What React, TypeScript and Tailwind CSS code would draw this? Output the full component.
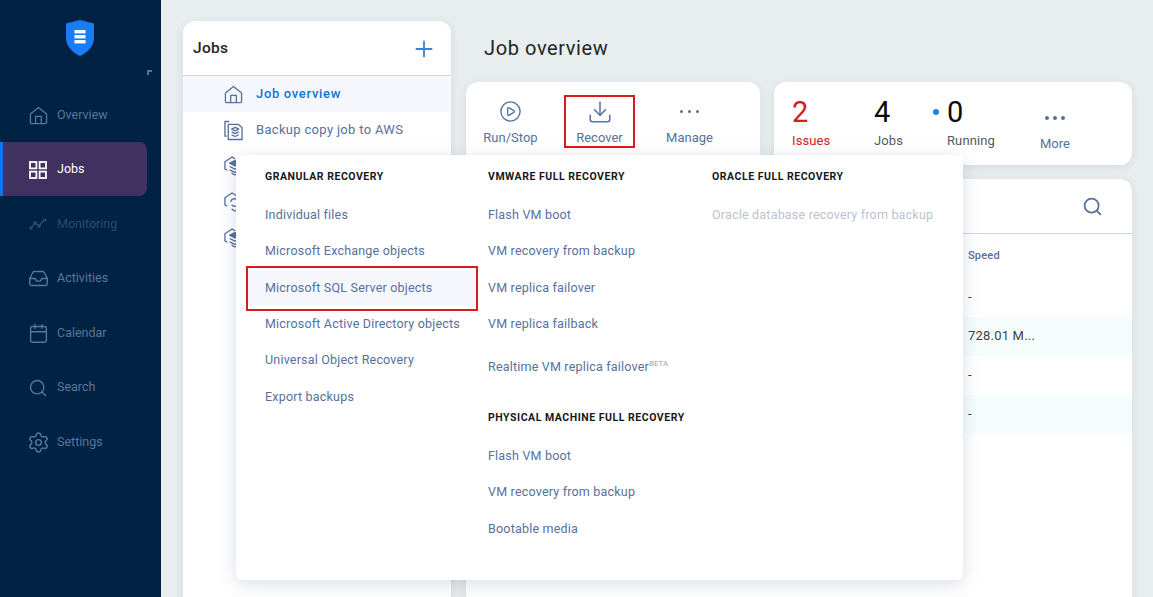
import { Calendar, CirclePlay, Download, Inbox, Plus, Search, Settings } from "lucide-react";

const font = { fontFamily: "Roboto, sans-serif" };

function HouseIcon({ className }: { className?: string }) {
    return (
        <svg viewBox="0 0 20 20" fill="none" stroke="currentColor" strokeWidth="1.4" strokeLinejoin="round" className={className}>
            <path d="M1.5 8.5 10 1.5l8.500 7v8.500a1.500 1.500 0 0 1-1.500 1.500H3a1.500 1.500 0 0 1-1.500-1.500z" />
            <path d="M7 18.500V11h6v7.500" />
        </svg>
    );
}

function GridIcon({ className }: { className?: string }) {
    return (
        <svg viewBox="0 0 18 18" fill="none" stroke="currentColor" strokeWidth="1.8" className={className}>
            <rect x="1" y="1" width="6.400" height="6.400" />
            <rect x="10.600" y="1" width="6.400" height="6.400" />
            <rect x="1" y="10.600" width="6.400" height="6.400" />
            <rect x="10.600" y="10.600" width="6.400" height="6.400" />
        </svg>
    );
}

function TrendIcon({ className }: { className?: string }) {
    return (
        <svg viewBox="0 0 18 12" fill="none" stroke="currentColor" strokeWidth="1.300" className={className}>
            <path d="M2 10 6 5l4 3 5-6" />
            <circle cx="2" cy="10" r="1.200" />
            <circle cx="6" cy="5" r="1.200" />
            <circle cx="10" cy="8" r="1.200" />
            <circle cx="15.500" cy="2" r="1.200" />
        </svg>
    );
}

function DocStackIcon({ className }: { className?: string }) {
    return (
        <svg viewBox="0 0 20 21" fill="none" stroke="currentColor" strokeWidth="1.400" strokeLinejoin="round" className={className}>
            <path d="M5.500 1H1v15.500h2" />
            <path d="M4.500 4H15l4 3.500V20H4.500z" />
            <path d="m8 9 3.800-1.800L15.500 9l-3.700 1.800zM8 12l3.800 1.800 3.700-1.800M8 15l3.800 1.800 3.700-1.800" />
        </svg>
    );
}

function CubeStackIcon({ className }: { className?: string }) {
    return (
        <svg viewBox="0 0 20 22" fill="none" stroke="currentColor" strokeWidth="1.400" strokeLinejoin="round" className={className}>
            <path d="M3.500 15.500 1 14V6.500L8.500 1.500l3 2" />
            <path d="m6 8 5.500-2.800L17 8l-5.500 2.800z" fill="currentColor" />
            <path d="m6 11.500 5.500 2.800 5.500-2.800M6 15l5.500 2.800L17 15M8 18.500l3.500 2 3.500-2" />
        </svg>
    );
}

function CubeSyncIcon({ className }: { className?: string }) {
    return (
        <svg viewBox="0 0 20 22" fill="none" stroke="currentColor" strokeWidth="1.400" strokeLinejoin="round" className={className}>
            <path d="M3.500 15.500 1 14V6.500L8.500 1.500 14 5" />
            <path d="M7 11a4 4 0 0 1 7-2M15 12a4 4 0 0 1-7 2" />
            <path d="m8 18.500 3.500 2 3.500-2" />
        </svg>
    );
}

function Dots({ className }: { className?: string }) {
    return (
        <div className={`flex gap-[4.500px] ${className ?? ""}`}>
            <span className="size-[3.500px] rounded-full bg-[#56719b]" />
            <span className="size-[3.500px] rounded-full bg-[#56719b]" />
            <span className="size-[3.500px] rounded-full bg-[#56719b]" />
        </div>
    );
}

const navItems = [
    { name: "Overview", icon: <HouseIcon className="size-[19px]" /> },
    { name: "Jobs", icon: <GridIcon className="size-[18px]" />, active: true },
    { name: "Monitoring", icon: <TrendIcon className="h-[12px] w-[18px]" />, disabled: true },
    { name: "Activities", icon: <Inbox className="size-[21px]" strokeWidth={1.600} /> },
    { name: "Calendar", icon: <Calendar className="size-[21px]" strokeWidth={1.600} /> },
    { name: "Search", icon: <Search className="size-[20px]" strokeWidth={1.700} /> },
    { name: "Settings", icon: <Settings className="size-[23px]" strokeWidth={1.500} /> },
];

function Sidebar() {
    return (
        <aside className="flex h-full w-[161px] shrink-0 flex-col bg-[#012242]">
            <div className="relative h-[87px] shrink-0">
                <svg viewBox="0 0 30 36" className="absolute left-[65px] top-[20px] h-[36px] w-[30px]">
                    <path d="M15 0 29 3.500V18c0 8-6 14-14 18C7 32 1 26 1 18V3.500z" fill="#1a7cf8" />
                    <rect x="9.500" y="10" width="11" height="3.400" fill="#fff" />
                    <rect x="9.500" y="15" width="11" height="3.400" fill="#fff" />
                    <rect x="9.500" y="20" width="11" height="3.400" fill="#fff" />
                </svg>
                <span className="absolute left-[147px] top-[70px] h-[5px] w-[5px] border-l-2 border-t-2 border-[#56719b]" />
            </div>
            <nav className="flex flex-col">
                {navItems.map((item) => (
                    <div
                        key={item.name}
                        className={`flex h-[54.500px] w-[147px] items-center border-l-[3px] pt-[2px] text-[12.500px] ${
                            item.active
                                ? "rounded-r-lg border-[#1273f0] bg-[#413160] text-white"
                                : item.disabled
                                  ? "border-transparent text-[#2f4a6b]"
                                  : "border-transparent text-[#56779f]"
                        }`}
                    >
                        <span className="flex w-[54px] justify-center pl-[16px]">{item.icon}</span>
                        {item.name}
                    </div>
                ))}
            </nav>
        </aside>
    );
}

function JobsPanel() {
    return (
        <section className="relative ml-[22px] mt-[21px] flex h-[600px] w-[268px] shrink-0 flex-col rounded-t-xl bg-white shadow-[0_2px_10px_rgba(70,80,140,0.14)]">
            <header className="flex h-[55px] shrink-0 items-center justify-between border-b border-[#cfd6e2] pl-[10px] pr-[14px] pt-[1px]">
                <h2 className="pt-[1px] text-[15.500px] font-medium tracking-[0.3px] text-[#22252b]">Jobs</h2>
                <Plus className="size-[26px] text-[#2e86de]" strokeWidth={1.700} />
            </header>
            <div className="flex h-[36px] items-center gap-[13px] bg-[#f5f7fd] pl-[41px] text-[13px] font-medium tracking-[0.68px] text-[#1273e0]">
                <HouseIcon className="size-[19px] text-[#56719b]" />
                Job overview
            </div>
            <div className="flex h-[36px] items-center gap-[13px] pl-[41px] text-[13px] tracking-[0.32px] text-[#56719b]">
                <DocStackIcon className="h-[21px] w-[19px]" />
                Backup copy job to AWS
            </div>
            <div className="flex h-[36px] items-center pl-[41px] text-[#56719b]">
                <CubeStackIcon className="h-[22px] w-[19px]" />
            </div>
            <div className="flex h-[36px] items-center pl-[41px] text-[#56719b]">
                <CubeSyncIcon className="h-[22px] w-[19px]" />
            </div>
            <div className="flex h-[36px] items-center pl-[41px] text-[#56719b]">
                <CubeStackIcon className="h-[22px] w-[19px]" />
            </div>
        </section>
    );
}

function ToolbarButton({ icon, label, className }: { icon: React.ReactNode; label: string; className?: string }) {
    return (
        <div className={`flex w-[71px] flex-col items-center ${className ?? ""}`}>
            <div className="flex h-[25px] items-center">{icon}</div>
            <span className="mt-[4px] leading-[20px]">{label}</span>
        </div>
    );
}

function Toolbar() {
    return (
        <div className="flex h-[83px] w-[294px] shrink-0 rounded-xl bg-white pl-[9px] pt-[17px] text-[13px] text-[#56719b] shadow-[0_2px_10px_rgba(70,80,140,0.12)]">
            <ToolbarButton icon={<CirclePlay className="size-[23px]" strokeWidth={1.400} />} label="Run/Stop" />
            <ToolbarButton className="ml-[18px]" icon={<Download className="size-[26px]" strokeWidth={1.400} />} label="Recover" />
            <ToolbarButton className="ml-[19px]" icon={<Dots />} label="Manage" />
        </div>
    );
}

function Stat({ value, label, color, labelColor, width }: { value: string; label: string; color: string; labelColor: string; width: string }) {
    return (
        <div className={`flex flex-col ${width}`}>
            <span className={`text-[29px] leading-[34px] ${color}`}>{value}</span>
            <span className={`mt-[2px] text-[13px] tracking-[0.1px] ${labelColor}`}>{label}</span>
        </div>
    );
}

function StatsCard() {
    return (
        <div className="ml-[14px] flex h-[83px] flex-1 rounded-xl bg-white pl-[18px] pt-[13px] shadow-[0_2px_10px_rgba(70,80,140,0.12)]">
            <Stat value="2" label="Issues" color="text-[#d0201c]" labelColor="text-[#d0201c]" width="w-[82px]" />
            <Stat value="4" label="Jobs" color="text-[#0b0b0b]" labelColor="text-[#55595f]" width="w-[73px]" />
            <div className="relative">
                <span className="absolute -left-[14px] top-[14px] size-[6px] rounded-full bg-[#1f80ea]" />
                <Stat value="0" label="Running" color="text-[#0b0b0b]" labelColor="text-[#55595f]" width="w-[93px]" />
            </div>
            <div className="flex flex-col items-center pt-[21px] text-[13px] text-[#56719b]">
                <Dots />
                <span className="mt-[14px]">More</span>
            </div>
        </div>
    );
}

function JobsTable() {
    const rows = ["-", "728.01 M...", "-", "-"];
    return (
        <div className="mt-[14px] h-[440px] shrink-0 rounded-t-xl bg-white shadow-[0_2px_10px_rgba(70,80,140,0.12)]">
            <div className="flex h-[55px] items-center justify-end border-b border-[#cfd6e2] pr-[29px]">
                <Search className="size-[21px] text-[#56719b]" strokeWidth={2} />
            </div>
            <div className="flex h-[43.500px] items-center pl-[502px] text-[11px] font-medium tracking-[0.2px] text-[#56719b]">Speed</div>
            {rows.map((speed, i) => (
                <div
                    key={i}
                    className={`flex h-[39px] items-center pl-[502px] text-[13px] tracking-[0.2px] text-[#3c3f44] ${i % 2 === 1 ? "bg-[#f5fdfd]" : ""}`}
                >
                    {speed}
                </div>
            ))}
        </div>
    );
}

function MenuHeading({ children, className }: { children: string; className?: string }) {
    return <h3 className={`flex h-[20px] items-center text-[10.500px] font-bold tracking-[0.53px] text-[#16181d] ${className ?? ""}`}>{children}</h3>;
}

function MenuLink({ children, muted }: { children: React.ReactNode; muted?: boolean }) {
    return (
        <div className={`flex h-[36.400px] items-center whitespace-nowrap text-[12.500px] tracking-[0.2px] ${muted ? "text-[#bcc3d0]" : "text-[#56719b]"}`}>
            {children}
        </div>
    );
}

function RecoverMenu() {
    return (
        <div className="absolute left-[236px] top-[155px] z-10 flex h-[425px] w-[727px] rounded-b-md bg-white pt-[12px] shadow-[0_4px_18px_rgba(60,70,120,0.18)]">
            <div className="ml-[29px] w-[223px]">
                <MenuHeading className="mb-[10px]">GRANULAR RECOVERY</MenuHeading>
                <MenuLink>Individual files</MenuLink>
                <MenuLink>Microsoft Exchange objects</MenuLink>
                <div className="-ml-[18px] w-[228px] bg-[#f5f7fd] pl-[18px]">
                    <MenuLink>Microsoft SQL Server objects</MenuLink>
                </div>
                <MenuLink>Microsoft Active Directory objects</MenuLink>
                <MenuLink>Universal Object Recovery</MenuLink>
                <MenuLink>Export backups</MenuLink>
            </div>
            <div className="w-[224px]">
                <MenuHeading className="mb-[10px]">VMWARE FULL RECOVERY</MenuHeading>
                <MenuLink>Flash VM boot</MenuLink>
                <MenuLink>VM recovery from backup</MenuLink>
                <MenuLink>VM replica failover</MenuLink>
                <MenuLink>VM replica failback</MenuLink>
                <div className="mt-[7px]">
                    <MenuLink>
                        Realtime VM replica failover
                        <sup className="text-[8px] tracking-normal text-[#9aa3b2]">BETA</sup>
                    </MenuLink>
                </div>
                <MenuHeading className="mb-[10px] mt-[22px]">PHYSICAL MACHINE FULL RECOVERY</MenuHeading>
                <MenuLink>Flash VM boot</MenuLink>
                <MenuLink>VM recovery from backup</MenuLink>
                <MenuLink>Bootable media</MenuLink>
            </div>
            <div>
                <MenuHeading className="mb-[10px]">ORACLE FULL RECOVERY</MenuHeading>
                <MenuLink muted>Oracle database recovery from backup</MenuLink>
            </div>
            <div className="absolute left-[10px] top-[111px] h-[45px] w-[232px] border-2 border-[#d81a1a]" />
            <div className="absolute left-[328px] -top-[60px] h-[53px] w-[71px] border-2 border-[#d81a1a]" />
        </div>
    );
}

export default function App() {
    return (
        <div className="relative flex h-[597px] w-[1153px] overflow-hidden bg-[#e8eeee]" style={font}>
            <Sidebar />
            <JobsPanel />
            <main className="ml-[15px] mr-[21px] flex min-w-0 flex-1 flex-col">
                <h1 className="ml-[18px] flex h-[82px] shrink-0 items-start pt-[34px] text-[20px] leading-[28px] tracking-[0.6px] text-[#22252b]">Job overview</h1>
                <div className="flex shrink-0">
                    <Toolbar />
                    <StatsCard />
                </div>
                <JobsTable />
            </main>
            <RecoverMenu />
        </div>
    );
}
